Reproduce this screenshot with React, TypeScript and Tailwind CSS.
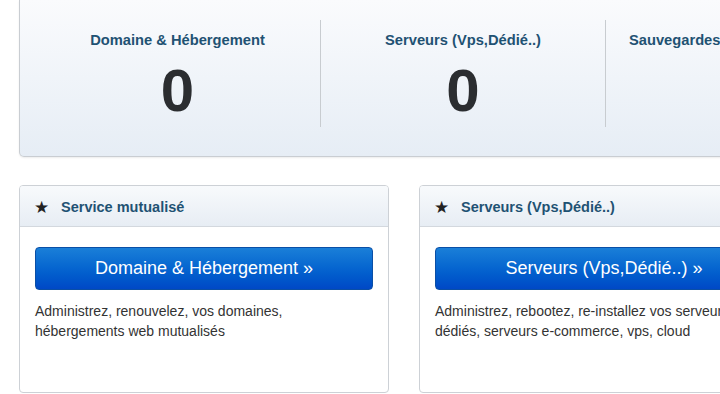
const stats = [
  { label: "Domaine & Hébergement", value: 0 },
  { label: "Serveurs (Vps,Dédié..)", value: 0 },
  { label: "Sauvegardes", value: 0 },
]

const services = [
  {
    title: "Service mutualisé",
    button: "Domaine & Hébergement »",
    text: "Administrez, renouvelez, vos domaines, hébergements web mutualisés",
  },
  {
    title: "Serveurs (Vps,Dédié..)",
    button: "Serveurs (Vps,Dédié..) »",
    text: "Administrez, rebootez, re-installez vos serveurs dédiés, serveurs e-commerce, vps, cloud",
  },
]

export default function App() {
  return (
    <div
      className="h-[394px] w-[720px] overflow-hidden bg-white"
      style={{ fontFamily: "'Liberation Sans', Arial, sans-serif" }}
    >
      {/* Stats panel, top edge is cut off by the viewport */}
      <div className="ml-[19px] flex w-[900px] rounded-b-[5px] border border-t-0 border-[#c9cdd2] bg-gradient-to-b from-[#fafbfd] to-[#e6edf5] px-[15px] pt-[20px] pb-[29px] shadow-[0_1px_2px_rgba(0,0,0,0.08)]">
        {stats.map((s, i) => (
          <div
            key={s.label}
            className={`flex h-[107px] w-[285px] flex-none flex-col pt-[12px] ${i > 0 ? "border-l border-[#c8ccd0]" : ""} ${i === 2 ? "items-start pl-[23px]" : "items-center"}`}
          >
            <div className="text-[14.7px] font-bold leading-[16px] whitespace-nowrap text-[#1f5273]">{s.label}</div>
            {i < 2 && (
              <div className="mt-[11px] text-[60px] font-bold leading-[64px] text-[#2b2d30]">{s.value}</div>
            )}
          </div>
        ))}
      </div>

      {/* Service cards */}
      <div className="mt-[28px] ml-[19px] flex gap-[30px]">
        {services.map((s) => (
          <div
            key={s.title}
            className="h-[208px] w-[370px] flex-none overflow-hidden rounded-[4px] border border-[#cdd1d6] bg-white"
          >
            <div className="flex h-[41px] items-center border-b border-[#d3d8de] bg-gradient-to-b from-[#f8fafc] to-[#e7edf4] pt-[3px] pl-[14px]">
              <span className="text-[17px] leading-none text-[#222]">★</span>
              <span className="ml-[12px] text-[14.5px] font-bold text-[#1f5273]">{s.title}</span>
            </div>
            <div className="px-[15px] pt-[20px]">
              <button
                type="button"
                className="flex h-[43px] w-full items-center justify-center rounded-[4px] border border-[#0a4fa6] bg-gradient-to-b from-[#1a7fd8] to-[#0048c6] text-[18px] text-white"
              >
                {s.button}
              </button>
              <p className="mt-[11px] pr-[30px] text-[14px] leading-[20px] text-[#333]">{s.text}</p>
            </div>
          </div>
        ))}
      </div>
    </div>
  )
}
